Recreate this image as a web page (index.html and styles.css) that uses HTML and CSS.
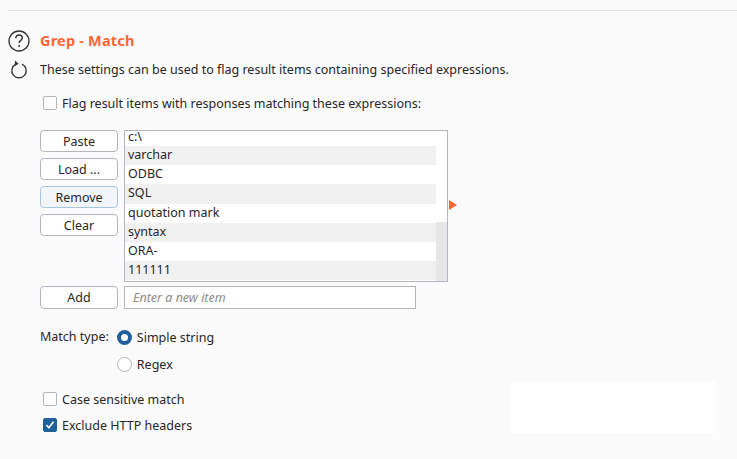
FILE: index.html
```html
<!DOCTYPE html>
<html lang="en">
<head>
    <meta charset="UTF-8">
    <meta name="viewport" content="width=device-width, initial-scale=1.0">
    <title>Grep - Match</title>
    <link rel="stylesheet" href="styles.css">
</head>
<body>
    <div class="top-rule"></div>
    <div class="head-row">
        <svg class="help-icon" width="22" height="22" viewBox="0 0 22 22">
            <circle cx="11" cy="11" r="10" fill="none" stroke="#333" stroke-width="1.3"/>
            <path d="M7.8 8.2c0-2 1.4-3.2 3.3-3.2s3.2 1.2 3.2 2.9c0 2.4-3.2 2.6-3.2 5.2" fill="none" stroke="#333" stroke-width="1.4"/>
            <circle cx="11.1" cy="16" r="1" fill="#333"/>
        </svg>
        <h1 class="title">Grep - Match</h1>
    </div>
    <div class="desc-row">
        <svg class="reload-icon" width="18" height="20" viewBox="0 0 18 20">
            <path d="M6 5.2a7.2 7.2 0 1 0 6 0" fill="none" stroke="#333" stroke-width="1.3"/>
            <path d="M5 1.5l3.6 3.2-4 2.6z" fill="#333"/>
        </svg>
        <p class="desc">These settings can be used to flag result items containing specified expressions.</p>
    </div>
    <label class="check-row flag-row">
        <span class="check"></span>
        Flag result items with responses matching these expressions:
    </label>

    <div class="list-area">
        <div class="btn-col">
            <button class="btn">Paste</button>
            <button class="btn">Load ...</button>
            <button class="btn btn-focus">Remove</button>
            <button class="btn">Clear</button>
        </div>
        <div class="list-box">
            <div class="list-rows">
                <div class="item item-first">c:\</div>
                <div class="item alt">varchar</div>
                <div class="item">ODBC</div>
                <div class="item alt">SQL</div>
                <div class="item">quotation mark</div>
                <div class="item alt">syntax</div>
                <div class="item">ORA-</div>
                <div class="item alt">111111</div>
            </div>
            <div class="scroll-track"><div class="scroll-thumb"></div></div>
        </div>
        <div class="arrow"></div>
    </div>

    <div class="add-row">
        <button class="btn">Add</button>
        <div class="new-item">Enter a new item</div>
    </div>

    <div class="match-type">
        <span class="match-label">Match type:</span>
        <div class="radio-col">
            <label class="radio-row"><span class="radio radio-on"></span>Simple string</label>
            <label class="radio-row"><span class="radio"></span>Regex</label>
        </div>
    </div>

    <label class="check-row case-row">
        <span class="check"></span>
        Case sensitive match
    </label>
    <label class="check-row exclude-row">
        <span class="check check-on">
            <svg width="10" height="10" viewBox="0 0 10 10"><path d="M1.5 5.2l2.4 2.6 4.6-6" fill="none" stroke="#fff" stroke-width="1.7"/></svg>
        </span>
        Exclude HTTP headers
    </label>

    <div class="blank-box"></div>
</body>
</html>
```

FILE: styles.css
```css
* {
    box-sizing: border-box;
}
html, body {
    height: 100%;
}
body {
    margin: 0;
    padding: 10px 0 0 8px;
    background-color: #fbfbfc;
    color: #262626;
    font-family: "Noto Sans", "Liberation Sans", sans-serif;
    font-size: 12.5px;
    overflow: hidden;
    position: relative;
}
.top-rule {
    height: 1px;
    background-color: #e6e6e6;
}
.head-row {
    display: flex;
    align-items: center;
    gap: 10px;
    margin-top: 19px;
    height: 22px;
}
.title {
    margin: 0 0 2px;
    color: #ff6633;
    font-size: 14.5px;
    font-weight: 700;
    letter-spacing: 0.2px;
}
.desc-row {
    display: flex;
    align-items: center;
    gap: 12px;
    margin-top: 7px;
    padding-left: 2px;
    height: 20px;
}
.desc {
    margin: 0;
}
.check-row {
    display: flex;
    align-items: center;
    gap: 5px;
    height: 20px;
}
.flag-row {
    margin: 14px 0 0 35px;
}
.check {
    width: 14px;
    height: 14px;
    background-color: #fff;
    border: 1px solid #b5b5b8;
    border-radius: 2px;
    display: flex;
    align-items: center;
    justify-content: center;
}
.check-on {
    background-color: #1f6099;
    border-color: #1f6099;
}
.list-area {
    display: flex;
    align-items: flex-start;
    margin: 17px 0 0 32px;
}
.btn-col {
    display: flex;
    flex-direction: column;
    gap: 6px;
    width: 78px;
}
.btn {
    width: 78px;
    height: 22px;
    padding: 0;
    background-color: #fff;
    border: 1px solid #b4b4c0;
    border-radius: 4px;
    color: #262626;
    font-family: inherit;
    font-size: 12.5px;
}
.btn-focus {
    background-color: #f2f6fa;
    border-color: #a9c4e0;
}
.list-box {
    display: flex;
    width: 324px;
    height: 152px;
    margin-left: 6px;
    background-color: #fff;
    border: 1px solid #b4b4c0;
    overflow: hidden;
}
.list-rows {
    width: 311px;
}
.item {
    height: 19.2px;
    line-height: 18px;
    padding-left: 3px;
}
.item-first {
    height: 15px;
    line-height: 12px;
}
.alt {
    background-color: #f1f1f1;
}
.scroll-track {
    width: 11px;
    padding-top: 91px;
}
.scroll-thumb {
    height: 60px;
    background-color: #e6e6e6;
}
.arrow {
    width: 0;
    height: 0;
    margin: 70px 0 0 1px;
    border-left: 8px solid #ff6633;
    border-top: 5px solid transparent;
    border-bottom: 5px solid transparent;
}
.add-row {
    display: flex;
    gap: 6px;
    margin: 4px 0 0 32px;
}
.add-row .btn {
    height: 23px;
}
.new-item {
    width: 292px;
    height: 23px;
    line-height: 21px;
    padding-left: 8px;
    background-color: #fff;
    border: 1px solid #b4b4c0;
    color: #8a8a8a;
    font-style: italic;
}
.match-type {
    display: flex;
    gap: 8px;
    margin: 18px 0 0 32px;
}
.match-label {
    line-height: 20px;
}
.radio-col {
    display: flex;
    flex-direction: column;
    gap: 7px;
}
.radio-row {
    display: flex;
    align-items: center;
    gap: 5px;
    height: 20px;
}
.radio {
    width: 15px;
    height: 15px;
    background-color: #fff;
    border: 1px solid #b5b5b8;
    border-radius: 50%;
}
.radio-on {
    border: 4px solid #1f6099;
}
.case-row {
    margin: 15px 0 0 35px;
}
.exclude-row {
    margin: 6px 0 0 35px;
}
.blank-box {
    position: absolute;
    left: 511px;
    top: 382px;
    width: 205px;
    height: 51px;
    background-color: #fff;
}
```
